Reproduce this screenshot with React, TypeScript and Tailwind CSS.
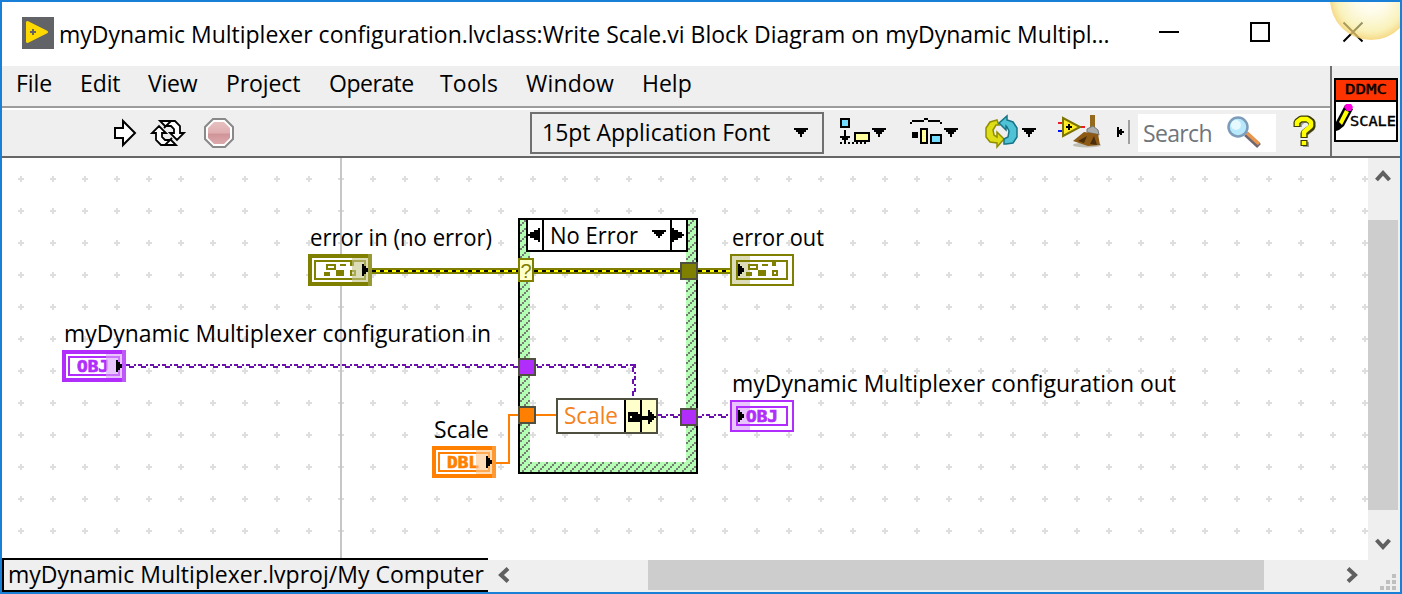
import type { ReactNode } from 'react';

const OLIVE = '#808000';
const PURPLE = '#b12dfb';
const ORANGE = '#ff8000';

type PicProps = { x: number; y: number; w: number; h: number; className?: string; children: ReactNode };

function Pic({ x, y, w, h, className = '', children }: PicProps) {
  return (
    <svg width={w} height={h} viewBox={`${x} ${y} ${w} ${h}`} className={`block shrink-0 ${className}`}>
      {children}
    </svg>
  );
}

function Drop({ x }: { x: number }) {
  return <path d={`M${x} 128h14v2h-2v2h-2v2h-2v3h-2v-3h-2v-2h-2v-2h-2z`} fill="#000" />;
}

type LabelProps = { x: number; y: number; w: number; children: string; fill?: string };

function Label({ x, y, w, children, fill = '#000' }: LabelProps) {
  return (
    <text x={x} y={y} textLength={w} lengthAdjust="spacingAndGlyphs" fontSize="23" fill={fill}>
      {children}
    </text>
  );
}

type TerminalProps = { x: number; y: number; color: string; text?: string; input?: boolean };

function Terminal({ x, y, color, text, input = false }: TerminalProps) {
  const b = input ? 4 : 2;
  const shadeX = input ? x + 44 : x;
  const arrowX = input ? x + 54 : x + 8;
  const textX = input ? x + 15 : x + 16;
  const gx = x - 308;
  return (
    <g>
      <rect x={x + b / 2} y={y + b / 2} width={64 - b} height={32 - b} fill="#fff" stroke={color} strokeWidth={b} />
      <rect x={x + 7} y={y + 7} width={50} height={18} fill="#fff" stroke={color} strokeWidth="2" />
      {text ? (
        <text
          x={textX}
          y={y + 22}
          textLength={32}
          lengthAdjust="spacingAndGlyphs"
          fontFamily="DejaVu Sans Mono"
          fontWeight="700"
          fontSize="16"
          fill={color}
          stroke={color}
          strokeWidth="0.7"
        >
          {text}
        </text>
      ) : (
        <g fill={color}>
          <path
            fillRule="evenodd"
            d={`M${gx + 326} 264h10v6h-10zM${gx + 328} 266h6v2h-6zM${gx + 340} 264h6v2h-6zM${gx + 350} 262h4v4h-4zM${gx + 324} 272h6v4h-6zM${gx + 336} 270h8v6h-8zM${gx + 350} 270h6v6h-6zM${gx + 352} 272h2v2h-2z`}
          />
        </g>
      )}
      {input ? (
        <g>
          <rect x={shadeX} y={y + 4} width={16} height={24} fill="#fff" opacity={0.45} />
          <rect x={shadeX} y={y + 4} width={16} height={24} fill={color} opacity={0.28} />
          <rect x={shadeX + 16} y={y} width={4} height={32} fill="#fff" opacity={0.2} />
        </g>
      ) : (
        <rect x={shadeX} y={y} width={20} height={32} fill={color} opacity={0.28} />
      )}
      <path d={`M${arrowX} ${y + 10}h2v2h2v2h2v4h-2v2h-2v2h-2z`} fill="#000" />
    </g>
  );
}

function Tunnel({ x, y, color }: { x: number; y: number; color: string }) {
  return <rect x={x + 1} y={y + 1} width={16} height={16} fill={color} stroke="#505040" strokeWidth="2" />;
}

function ErrorWire({ x1, x2 }: { x1: number; x2: number }) {
  return (
    <g>
      <path d={`M${x1} 271H${x2}`} stroke={OLIVE} strokeWidth="6" />
      <path d={`M${x1} 271H${x2}`} stroke="#ffff00" strokeWidth="2" />
      <path d={`M${x1} 271H${x2}`} stroke="#000" strokeWidth="2" strokeDasharray="4 4" />
    </g>
  );
}

function Diagram() {
  return (
    <svg
      width="1366"
      height="402"
      viewBox="2 158 1366 402"
      shapeRendering="crispEdges"
      className="block bg-white"
      fontFamily="'Open Sans', 'Noto Sans', sans-serif"
    >
      <defs>
        <pattern id="grid" x="5" y="163" width="32" height="32" patternUnits="userSpaceOnUse">
          <path d="M13 15h6v2h-6zM15 13h2v6h-2z" fill="#dedede" />
        </pattern>
        <pattern id="hatch" x="520" y="218" width="8" height="8" patternUnits="userSpaceOnUse">
          <rect width="8" height="8" fill="#b4ffb4" />
          <path d="M0 6h2v2h-2zM2 4h2v2h-2zM4 2h2v2h-2zM6 0h2v2h-2z" fill="#747c74" />
        </pattern>
        <pattern id="objH" x="126" y="364" width="12" height="50" patternUnits="userSpaceOnUse">
          <path d="M0 0h4v2h-4zM8 0h2v2h-2zM3 2h5v2h-5z" fill="#6c10b0" />
        </pattern>
        <pattern id="objH2" x="658" y="414" width="12" height="50" patternUnits="userSpaceOnUse">
          <path d="M0 0h4v2h-4zM8 0h2v2h-2zM3 2h5v2h-5z" fill="#6c10b0" />
        </pattern>
        <pattern id="objV" x="632" y="364" width="4" height="12" patternUnits="userSpaceOnUse">
          <path d="M2 0h2v4h-2zM2 8h2v2h-2zM0 3h2v5h-2z" fill="#6c10b0" />
        </pattern>
      </defs>

      <rect x="2" y="158" width="1366" height="402" fill="url(#grid)" />
      <rect x="340" y="158" width="2" height="402" fill="#c6c6c6" />

      <rect x="518" y="218" width="180" height="256" fill="#000" />
      <rect x="520" y="220" width="176" height="252" fill="url(#hatch)" />
      <rect x="530" y="230" width="156" height="232" fill="#fff" />
      <rect x="530" y="230" width="156" height="232" fill="url(#grid)" />
      <rect x="527" y="219" width="160" height="32" fill="#fff" stroke="#000" strokeWidth="2" />
      <path d="M542 219h2v32h-2zM670 219h2v32h-2z" fill="#000" />
      <path d="M528 234h2v-2h4v-2h4v-2h2v14h-2v-2h-4v-2h-4v-2h-2z" fill="#000" />
      <path d="M684 234v2h-2v2h-4v2h-4v2h-2v-14h2v2h4v2h4v2z" fill="#000" />
      <path d="M652 230h14v2h-2v2h-2v2h-2v2h-2v-2h-2v-2h-2v-2h-2z" fill="#000" />
      <Label x={550} y={244} w={88}>No Error</Label>

      <ErrorWire x1={372} x2={518} />
      <ErrorWire x1={534} x2={680} />
      <ErrorWire x1={698} x2={730} />
      <rect x="519" y="259" width="14" height="22" fill="#ffffcc" stroke={OLIVE} strokeWidth="2" />
      <text x="526" y="278" fontSize="20" textAnchor="middle" fill={OLIVE} fontFamily="Liberation Sans">?</text>
      <Tunnel x={680} y={262} color={OLIVE} />

      <rect x="126" y="364" width="392" height="4" fill="url(#objH)" />
      <rect x="536" y="364" width="98" height="4" fill="url(#objH)" />
      <rect x="632" y="364" width="4" height="32" fill="url(#objV)" />
      <rect x="658" y="414" width="72" height="4" fill="url(#objH2)" />
      <path d="M496 463H509V415H518M536 415H556" fill="none" stroke={ORANGE} strokeWidth="2" />
      <Tunnel x={518} y={358} color={PURPLE} />
      <Tunnel x={518} y={406} color={ORANGE} />
      <Tunnel x={680} y={408} color={PURPLE} />

      <rect x="557" y="399" width="100" height="34" fill="#fff" stroke="#505040" strokeWidth="2" />
      <rect x="626" y="400" width="30" height="32" fill="#ffffcc" />
      <path d="M624 400h2v32h-2zM640 400h2v32h-2z" fill="#000" />
      <path d="M628 412h10v2h2v2h8v-6h2v2h2v2h2v2h2v2h-2v2h-2v2h-2v2h-2v-4h-8v2h-12z" fill="#000" />
      <path d="M630 416h2v2h-2z" fill="#ffffcc" />
      <Label x={564} y={424} w={54} fill="#f58220">Scale</Label>

      <Terminal x={308} y={254} color={OLIVE} input />
      <Terminal x={730} y={254} color={OLIVE} />
      <Terminal x={62} y={350} color={PURPLE} text="OBJ" input />
      <Terminal x={730} y={400} color={PURPLE} text="OBJ" />
      <Terminal x={432} y={446} color={ORANGE} text="DBL" input />

      <Label x={310} y={246} w={182}>error in (no error)</Label>
      <Label x={732} y={246} w={92}>error out</Label>
      <Label x={64} y={342} w={427}>myDynamic Multiplexer configuration in</Label>
      <Label x={434} y={438} w={55}>Scale</Label>
      <Label x={732} y={392} w={444}>myDynamic Multiplexer configuration out</Label>
    </svg>
  );
}

function TitleBar() {
  return (
    <header className="relative flex h-16 shrink-0 items-center bg-white">
      <Pic x={22} y={17} w={32} h={32} className="-mt-0.5 ml-5">
        <rect x="22" y="17" width="32" height="32" fill="#626366" />
        <path d="M27.500 22.500v19L46.500 32z" fill="#ffd800" stroke="#ffd800" strokeWidth="3" strokeLinejoin="round" />
        <path d="M30 32h6M33 29v6" stroke="#626366" strokeWidth="2" />
      </Pic>
      <h1 className="ml-[5px] w-[1060px] whitespace-nowrap text-[23px] leading-8 tracking-[-0.005px]">
        myDynamic Multiplexer configuration.lvclass:Write Scale.vi Block Diagram on myDynamic Multipl...
      </h1>
      <Pic x={1159} y={2} w={20} h={64} className="ml-10">
        <path d="M1159 32h20" stroke="#000" strokeWidth="2" />
      </Pic>
      <Pic x={1250} y={2} w={20} h={64} className="ml-[71px]">
        <rect x="1251" y="23" width="18" height="18" fill="none" stroke="#000" strokeWidth="2" />
      </Pic>
      <Pic x={1342} y={2} w={22} h={64} className="ml-[72px]">
        <path d="M1343.500 22.500l19 19M1362.500 22.500l-19 19" stroke="#000" strokeWidth="2" />
      </Pic>
      <svg width="72" height="42" viewBox="1330 0 72 42" className="absolute -right-0.5 -top-0.5">
        <defs>
          <radialGradient id="halo" gradientUnits="userSpaceOnUse" cx="1371" cy="-1" r="41" fy="-8">
            <stop offset="0" stopColor="#ffffff" stopOpacity="0.5" />
            <stop offset="0.45" stopColor="#fdf9d8" stopOpacity="0.6" />
            <stop offset="0.82" stopColor="#f6ea92" stopOpacity="0.62" />
            <stop offset="1" stopColor="#f4cf68" stopOpacity="0.8" />
          </radialGradient>
        </defs>
        <circle cx="1371" cy="-1" r="41" fill="url(#halo)" />
      </svg>
    </header>
  );
}

function MenuBar() {
  return (
    <nav className="flex h-10 items-start pt-px text-[23px] leading-8">
      <span className="ml-3.5 w-16 tracking-[-0.1px]">File</span>
      <span className="w-[68px] tracking-[-0.1px]">Edit</span>
      <span className="w-[78px] tracking-[-0.2px]">View</span>
      <span className="w-[103px] tracking-[-0.1px]">Project</span>
      <span className="w-[111px] tracking-[-0.5px]">Operate</span>
      <span className="w-[86px] tracking-[0.2px]">Tools</span>
      <span className="w-[116px] tracking-[0.2px]">Window</span>
      <span>Help</span>
    </nav>
  );
}

function ToolBar() {
  return (
    <div className="flex h-[46px] items-center">
      <Pic x={112} y={110} w={124} h={46} className="ml-[110px]">
        <path d="M115 128h8v-7l12 12-12 12v-7h-8z" fill="#fff" stroke="#000" strokeWidth="2" />
        <g fill="#fff" stroke="#000" strokeWidth="1.800">
          <path d="M160 121h15l5 5v7h4l-7 7-7-7h4v-4l-3-3h-6z" />
          <path d="M176 145h-15l-5-5v-7h-4l7-7 7 7h-4v4l3 3h6z" />
          <path d="M165 145l7-7M171 121l-7 7" fill="none" />
        </g>
        <path d="M213 119h12l8 8v12l-8 8h-12l-8-8v-12z" fill="#fff" stroke="#898989" strokeWidth="2" />
        <path d="M214 122h10l6 6v10l-6 6h-10l-6-6v-10z" fill="url(#stop)" />
        <defs>
          <linearGradient id="stop" x1="0" y1="0" x2="0" y2="1">
            <stop offset="0" stopColor="#e8c0c0" />
            <stop offset="0.5" stopColor="#dfadb0" />
            <stop offset="0.55" stopColor="#d09498" />
            <stop offset="1" stopColor="#dcaaac" />
          </linearGradient>
        </defs>
      </Pic>
      <button className="ml-[294px] flex h-[42px] w-[294px] items-center border-2 border-[#707070] pl-2.5 text-left">
        <span className="-mt-[3px] w-[252px] whitespace-nowrap text-[23px] leading-8 tracking-[-0.02px]">15pt Application Font</span>
        <Pic x={0} y={126} w={14} h={14}>
          <Drop x={0} />
        </Pic>
      </button>
      <Pic x={838} y={110} w={296} h={46} className="ml-3.5">
        <g shapeRendering="crispEdges">
          <rect x="841" y="119" width="8" height="8" fill="#73dcff" stroke="#000" strokeWidth="2" />
          <path d="M844 130h2v6h4v2h-2v2h-2v2h-2v-2h-2v-2h-2v-2h4z" fill="#000" />
          <rect x="855" y="133" width="14" height="8" fill="#ffff9c" stroke="#000" strokeWidth="2" />
          <path d="M840 143h28" stroke="#000" strokeWidth="2" strokeDasharray="2 2" />
          <Drop x={872} />
          <path d="M910 122h2v-2h12v-2h4v2h12v2h2v2h-2v-2h-12v-2h-4v2h-12v2h-2z" fill="#000" />
          <rect x="912" y="132" width="6" height="6" fill="#000" />
          <rect x="921" y="129" width="6" height="14" fill="#ffff9c" stroke="#000" strokeWidth="2" />
          <rect x="931" y="135" width="10" height="8" fill="#73dcff" stroke="#000" strokeWidth="2" />
          <Drop x={944} />
          <Drop x={1022} />
        </g>
        <path d="M997 120l-7 2-4 6v9l4 5 7 1v4l7-8-7-7v5l-3-2-1-5 3-5h3l-1-2z" fill="#dede16" stroke="#918d00" strokeWidth="1.500" />
        <path d="M999 123l8-7v4l6 2 4 6v9l-4 6-7 1h-2v-5l4-2 1-6-2-4-1-1v4z" fill="#4fc2d5" stroke="#177486" strokeWidth="1.500" />
        <ellipse cx="1087" cy="145" rx="14" ry="2.500" fill="#bdbdb5" />
        <path d="M1058 123h5M1078 127h7" stroke="#ee1c24" strokeWidth="2" />
        <path d="M1058 131h5" stroke="#0010ff" strokeWidth="2" />
        <path d="M1063 118v18l17-9z" fill="#ffee27" stroke="#7e7600" strokeWidth="2" />
        <path d="M1066 127h6M1069 124v6" stroke="#000" strokeWidth="2" />
        <path d="M1090 115h5v14h-5z" fill="#946b1e" />
        <path d="M1087 129l6-3 5 4 1 5-12-3z" fill="#a9adad" stroke="#777" strokeWidth="1" />
        <path d="M1084 132l14 2 2 11-12 1-15-5z" fill="#8c5a14" />
        <path d="M1078 141l9-5-3 7zM1090 144l4-8 3 9z" fill="#4a2d0c" />
        <path d="M1117 127h2v3h1v-1h2v2h2v2h-2v2h-2v-1h-1v3h-2z" fill="#000" />
        <path d="M1128 120h2v24h-2z" fill="#a0a0a0" />
      </Pic>
      <div className="ml-1 flex h-[38px] w-[138px] items-center bg-white pl-[5px] text-[#70757b]">
        <span className="w-[82px] text-[23px] leading-8 tracking-[-0.65px]">Search</span>
        <Pic x={1225} y={115} w={38} h={36}>
          <path d="M1246 134l13 12" stroke="#6c6670" strokeWidth="5.500" />
          <path d="M1247 133l12 11" stroke="#e8964b" strokeWidth="3.500" />
          <circle cx="1238" cy="127" r="9.500" fill="#b8e8fb" stroke="#7d9cba" strokeWidth="2.500" />
          <circle cx="1236" cy="125" r="5" fill="#e6f9ff" />
        </Pic>
      </div>
      <Pic x={1290} y={110} w={30} h={46} className="ml-3.5">
        <g fill="none" strokeLinejoin="bevel">
          <path d="M1299 127v-3l4-4h5l4 4v4l-7 6v4M1306 142v5" stroke="#999" strokeWidth="6" />
          <path d="M1297 127v-5l4-3h7l4 3v5l-8 6v5M1304 140v6" stroke="#3c3c00" strokeWidth="7" />
          <path d="M1297 126v-4l4-3h6l4 3v4l-7 6v5M1304 141v4" stroke="#ffff00" strokeWidth="4.500" />
        </g>
      </Pic>
    </div>
  );
}

function ViIcon() {
  return (
    <aside className="flex h-[90px] w-[70px] border-l-2 border-[#707070] pt-3 pl-0.5">
      <Pic x={1334} y={78} w={64} h={64}>
        <rect x="1335" y="79" width="62" height="62" fill="#fff" stroke="#000" strokeWidth="2" />
        <rect x="1336" y="80" width="60" height="20" fill="#ff3300" />
        <path d="M1336 100h60v2h-60z" fill="#000" />
        <g fontFamily="DejaVu Sans Mono" fill="#000" stroke="#000" strokeWidth="0.4">
          <text x="1345" y="94" fontSize="14" textLength="42" lengthAdjust="spacingAndGlyphs">DDMC</text>
          <text x="1350" y="126" fontSize="14" textLength="46" lengthAdjust="spacingAndGlyphs">SCALE</text>
        </g>
        <path d="M1336 131v-9l9-17 8 4-9 17-5 4z" fill="#000" />
        <path d="M1339 122l6-12 4 2-7 13z" fill="#ffff00" />
        <path d="M1344 107l2-3h5l2 3-2 4h-4z" fill="#ff00e1" />
      </Pic>
    </aside>
  );
}

function Chevron({ d, w, h, className }: { d: string; w: number; h: number; className: string }) {
  return (
    <svg width={w} height={h} viewBox={`0 0 ${w} ${h}`} className={`block shrink-0 ${className}`}>
      <path d={d} fill="none" stroke="#606060" strokeWidth="4" />
    </svg>
  );
}

export default function App() {
  return (
    <div className="flex h-[594px] w-[1402px] flex-col overflow-hidden border-2 border-[#1a80d7] bg-[#efefef] font-['Open_Sans','Noto_Sans',sans-serif] text-black">
      <TitleBar />
      <div className="flex h-[90px] shrink-0">
        <div className="w-[1328px]">
          <MenuBar />
          <div className="h-1 border-t-2 border-[#9c9c9c] bg-white" />
          <ToolBar />
        </div>
        <ViIcon />
      </div>
      <div className="h-0.5 shrink-0 bg-[#666666]" />
      <div className="flex h-[402px] shrink-0">
        <Diagram />
        <div className="flex w-8 flex-col">
          <Chevron d="M1.500 11L8 4l6.500 7" w={16} h={14} className="mt-[11px] ml-[7px]" />
          <div className="mt-[37px] h-[290px] w-[30px] bg-[#cdcdcd]" />
          <Chevron d="M1.500 2L8 9l6.500-7" w={16} h={14} className="mt-7 ml-[7px]" />
        </div>
      </div>
      <div className="flex h-8 shrink-0">
        <footer className="-mt-0.5 flex h-[34px] w-[486px] items-start border-2 border-r-0 border-black bg-[#efefef] pl-1">
          <span className="whitespace-nowrap text-[23px] leading-7 tracking-[0.02px]">myDynamic Multiplexer.lvproj/My Computer</span>
        </footer>
        <Chevron d="M11 1.500L4 8l7 6.500" w={14} h={16} className="mt-[7px] ml-[9px]" />
        <div className="ml-[137px] h-[30px] w-[616px] bg-[#cdcdcd]" />
        <Chevron d="M2 1.500L9 8l-7 6.500" w={14} h={16} className="mt-[7px] ml-[82px]" />
        <svg width="16" height="16" viewBox="0 0 16 16" className="ml-5 mt-3.5 block">
          <path d="M12 0h4v4h-4zM6 6h4v4H6zM12 6h4v4h-4zM0 12h4v4H0zM6 12h4v4H6zM12 12h4v4h-4z" fill="#bfbfbf" />
        </svg>
      </div>
    </div>
  );
}
